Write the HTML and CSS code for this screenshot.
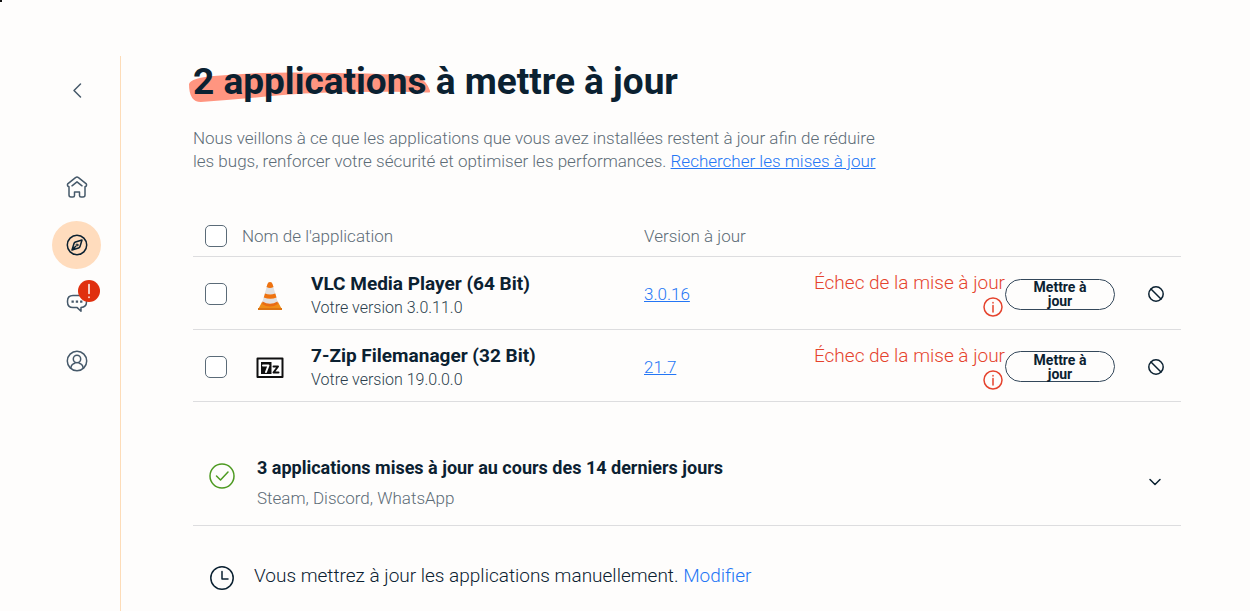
FILE: index.html
```
<!DOCTYPE html>
<html lang="fr">
<head>
<meta charset="utf-8">
<meta name="viewport" content="width=device-width, initial-scale=1">
<title>Applications à mettre à jour</title>
<link rel="stylesheet" href="styles.css">
</head>
<body>
<span class="corner-mark"></span>
<div class="app">
  <nav class="sidebar" aria-label="Navigation">
    <a class="nav-item nav-back" href="#retour" aria-label="Retour">
      <svg width="24" height="24" viewBox="0 0 24 24"><path d="M15.500 5 9 11.500l6.500 6.500"/></svg>
    </a>
    <a class="nav-item" href="#accueil" aria-label="Accueil">
      <svg width="24" height="24" viewBox="0 0 24 24"><path d="M4 11.800v8.200q0 2 2 2h2q1.500 0 1.500-1.500V17h5v3.500q0 1.500 1.500 1.500h2q2 0 2-2v-8.200q2.200-1 1.300-2.900L13.500 2.600q-1.500-1-3 0L2.700 8.900Q1.800 10.800 4 11.800M7 10.800 12 6.800l5 4"/></svg>
    </a>
    <a class="nav-item nav-active" href="#explorer" aria-label="Explorer" aria-current="page">
      <svg width="24" height="24" viewBox="0 0 24 24"><circle cx="12" cy="12" r="9.700"/><path d="M17 7l-2 6.500Q14.700 14.500 13.500 15L7 17l2-6.500Q9.300 9.500 10.500 9zM7 17l3.500-3.500"/><circle cx="12" cy="12" r="1" stroke-width="1"/></svg>
    </a>
    <a class="nav-item" href="#messages" aria-label="Messages">
      <svg width="24" height="24" viewBox="0 0 24 24"><path d="M8 4.500h8q5.500 0 5.500 5.500v1q0 5-5.500 5.500v3.700L12.200 16.600H8Q2.500 16.500 2.500 11v-1Q2.500 4.500 8 4.500z"/><path class="dots" d="M6.500 9.500h2.300v2.300H6.500zM10.800 9.500h2.300v2.300h-2.300zM15.100 9.500h2.300v2.300h-2.300z"/></svg>
      <span class="badge" aria-hidden="true"><svg width="22" height="22" viewBox="0 0 22 22"><path d="M11 4.500v9M11 17v.5"/></svg></span>
    </a>
    <a class="nav-item" href="#profil" aria-label="Profil">
      <svg width="24" height="24" viewBox="0 0 24 24"><circle cx="12" cy="12" r="9.700"/><circle cx="12" cy="10" r="3.700"/><path d="M5.800 19q.7-4 4-4.700M18.200 19q-.7-4-4-4.700"/></svg>
    </a>
  </nav>

  <main class="content">
    <h1 class="title"><span class="highlight"><svg class="brush" viewBox="0 0 244 32" preserveAspectRatio="none" aria-hidden="true"><path d="M0 12Q2 6 25 4 75-1 145 1 195 1 231 5q9 3 13 15-2 1-9 0-90-1-140 3-42 4-83 7Q0 30 0 12z"/></svg>2 applications</span> à mettre à jour</h1>
    <p class="intro">Nous veillons à ce que les applications que vous avez installées restent à jour afin de réduire les bugs, renforcer votre sécurité et optimiser les performances. <a href="#rechercher">Rechercher les mises à jour</a></p>

    <table class="apps">
      <colgroup><col class="col-check"><col class="col-name"><col class="col-version"><col class="col-status"><col class="col-ignore"></colgroup>
      <thead>
        <tr>
          <th><input type="checkbox" class="check" aria-label="Tout sélectionner"></th>
          <th>Nom de l'application</th>
          <th>Version à jour</th>
          <td></td>
          <td></td>
        </tr>
      </thead>
      <tbody>
        <tr>
          <td><input type="checkbox" class="check" aria-labelledby="vlc"></td>
          <td>
            <div class="app-cell">
              <svg class="app-icon" width="28" height="30" viewBox="0 0 28 30"><path d="M6 21h16l4 7.500H2z" fill="#f08c16"/><path d="M2 27h24v2H2z" fill="#dc7411"/><path d="M14 1q2 0 2.500 2L22 22q-8 6-16 0L11.500 3Q12 1 14 1z" fill="#e2e0df"/><path d="M11.500 3Q12 1 14 1t2.500 2l1 3q-3.500 2-7 0zM9 12.500q5 2 10.300 0l1.200 4q-6 2.500-12.700 0z" fill="#ef7310"/><path d="M6.500 20.500Q14 25 21.500 20.500L22 23q-8 5-16 0z" fill="#e96c12"/></svg>
              <div><div class="app-name" id="vlc">VLC Media Player (64 Bit)</div><div class="app-version">Votre version 3.0.11.0</div></div>
            </div>
          </td>
          <td><a href="#vlc-version">3.0.16</a></td>
          <td>
            <div class="status">
              <div class="error">Échec de la mise à jour <svg width="20" height="20" viewBox="0 0 20 20"><circle cx="10" cy="10" r="9"/><path d="M10 5.500v.5M10 8.500v6.500"/></svg></div>
              <button class="update" type="button">Mettre à jour</button>
            </div>
          </td>
          <td><button class="ignore" type="button" aria-label="Ignorer VLC Media Player"><svg width="18" height="18" viewBox="0 0 18 18"><circle cx="9" cy="9" r="7.200"/><path d="m4 4 10 10"/></svg></button></td>
        </tr>
        <tr>
          <td><input type="checkbox" class="check" aria-labelledby="zip"></td>
          <td>
            <div class="app-cell">
              <svg class="app-icon" width="28" height="22" viewBox="0 0 28 22"><path d="M1.500 1.500h25v18.500h-25z" fill="#fff" stroke="#101010" stroke-width="2"/><path d="M5 5h10.500v12H5z" fill="#101010"/><path d="M7 8.500h5.500L10 15" fill="none" stroke="#fff" stroke-width="2"/><path d="M17.500 9.500h4.500l-4.500 6h5" fill="none" stroke="#101010" stroke-width="2"/></svg>
              <div><div class="app-name" id="zip">7-Zip Filemanager (32 Bit)</div><div class="app-version">Votre version 19.0.0.0</div></div>
            </div>
          </td>
          <td><a href="#zip-version">21.7</a></td>
          <td>
            <div class="status">
              <div class="error">Échec de la mise à jour <svg width="20" height="20" viewBox="0 0 20 20"><circle cx="10" cy="10" r="9"/><path d="M10 5.500v.5M10 8.500v6.500"/></svg></div>
              <button class="update" type="button">Mettre à jour</button>
            </div>
          </td>
          <td><button class="ignore" type="button" aria-label="Ignorer 7-Zip Filemanager"><svg width="18" height="18" viewBox="0 0 18 18"><circle cx="9" cy="9" r="7.200"/><path d="m4 4 10 10"/></svg></button></td>
        </tr>
      </tbody>
    </table>

    <section class="recent">
      <svg class="done" width="26" height="26" viewBox="0 0 26 26"><circle cx="13" cy="13" r="12"/><path d="m7.500 13 4 4 7.500-8"/></svg>
      <div class="recent-text">
        <h2>3 applications mises à jour au cours des 14 derniers jours</h2>
        <p>Steam, Discord, WhatsApp</p>
      </div>
      <button class="expand" type="button" aria-label="Afficher les détails"><svg width="16" height="16" viewBox="0 0 16 16"><path d="m3 5.500 5 5 5-5"/></svg></button>
    </section>

    <section class="schedule">
      <svg class="clock" width="26" height="26" viewBox="0 0 26 26"><circle cx="13" cy="13" r="11.200"/><path d="M13 6.500V14h6"/></svg>
      <p>Vous mettrez à jour les applications manuellement. <a href="#modifier">Modifier</a></p>
    </section>
  </main>
</div>
</body>
</html>
```
FILE: styles.css
```
* { box-sizing: border-box; }
body {
  margin: 0;
  min-height: 100vh;
  background: #fefdfc;
  color: #0b2131;
  font-family: Roboto, "Liberation Sans", sans-serif;
  font-size: 17px;
  font-weight: 300;
  line-height: 24px;
}
h1, h2, p { margin: 0; }
a { color: #2476f5; }
svg { display: block; fill: none; stroke: currentColor; stroke-width: 1.5; stroke-linecap: round; stroke-linejoin: round; flex: none; }
.corner-mark { position: absolute; top: 0; left: 0; width: 2px; height: 2px; background: #111; }
.app { display: flex; min-height: 100vh; padding-top: 56px; }
.sidebar {
  flex: none;
  width: 121px;
  padding: 11px 0 0 52px;
  border-right: 1px solid #fddcb8;
}
.nav-item {
  position: relative;
  display: grid;
  place-items: center;
  width: 49px;
  height: 48px;
  margin-bottom: 10px;
  border-radius: 50%;
  color: #46596a;
}
.nav-back { margin-bottom: 48px; }
.nav-active { background: #ffdcbd; color: #0b2131; }
.nav-item .dots { fill: currentColor; stroke: none; }
.badge {
  position: absolute;
  top: 1px;
  left: 26px;
  border-radius: 50%;
  background: #e0300f;
  color: #fff;
}
.content { flex: 1; padding: 4px 69px 16px 72px; }
.title { font-size: 37px; font-weight: 700; line-height: 44px; }
.highlight { position: relative; z-index: 0; }
.brush {
  position: absolute;
  z-index: -1;
  top: 12px;
  left: -4px;
  width: calc(100% + 8px);
  height: 32px;
  fill: #ff9580;
  stroke: none;
}
.intro { max-width: 696px; margin-top: 23px; color: #5d6c77; line-height: 23px; }
.apps {
  width: 100%;
  margin-top: 43px;
  border-collapse: separate;
  border-spacing: 0;
  table-layout: fixed;
}
.apps th, .apps td { padding: 0; border-bottom: 1px solid #dddddf; text-align: left; font-weight: 300; }
.apps th { height: 41px; color: #5d6c77; }
.apps tbody td { height: 73px; padding-top: 2px; }
.apps tbody tr:last-child td { height: 72px; }
.col-check { width: 49px; }
.col-version { width: 142px; }
.col-name { width: 402px; }
.col-ignore { width: 66px; }
.check {
  display: block;
  appearance: none;
  width: 22px;
  height: 22px;
  margin: 0 0 0 12px;
  border: 1px solid #5b6b78;
  border-radius: 5px;
  background: #fff;
}
.app-cell { display: grid; grid-template-columns: 28px 1fr; align-items: center; column-gap: 27px; padding: 3px 0 0 14px; }
.app-icon { stroke: none; }
.app-name { font-size: 19px; font-weight: 700; }
.app-version { color: #2b3e4c; font-size: 16px; }
.status { display: flex; align-items: center; justify-content: flex-end; }
.error { width: 194px; color: #e5432d; font-size: 19px; text-align: right; }
.error svg { margin: 2px 2px 0 auto; }
.update {
  flex: none;
  width: 110px;
  height: 31px;
  padding: 0 16px;
  border: 1px solid #33475a;
  border-radius: 16px;
  background: transparent;
  color: #0b2131;
  font: 700 14px/14px Roboto, "Liberation Sans", sans-serif;
}
.ignore, .expand { display: block; padding: 0; border: 0; background: none; color: #0b2131; }
.ignore { margin-left: 32px; }
.recent {
  display: flex;
  align-items: flex-start;
  margin-top: 53px;
  padding: 0 16px 15px;
  border-bottom: 1px solid #dddddf;
}
.done { margin-top: 8px; color: #4d9a21; }
.recent-text { flex: 1; margin-left: 22px; }
.recent h2 { font-size: 18px; font-weight: 700; line-height: 26px; }
.recent p { margin-top: 5px; color: #5d6c77; }
.expand { margin-top: 19px; margin-right: 2px; }
.schedule { display: flex; align-items: flex-start; gap: 19px; padding: 38px 16px 0; font-size: 19px; }
.clock { margin-top: 1px; }
.schedule a { text-decoration: none; }
```
